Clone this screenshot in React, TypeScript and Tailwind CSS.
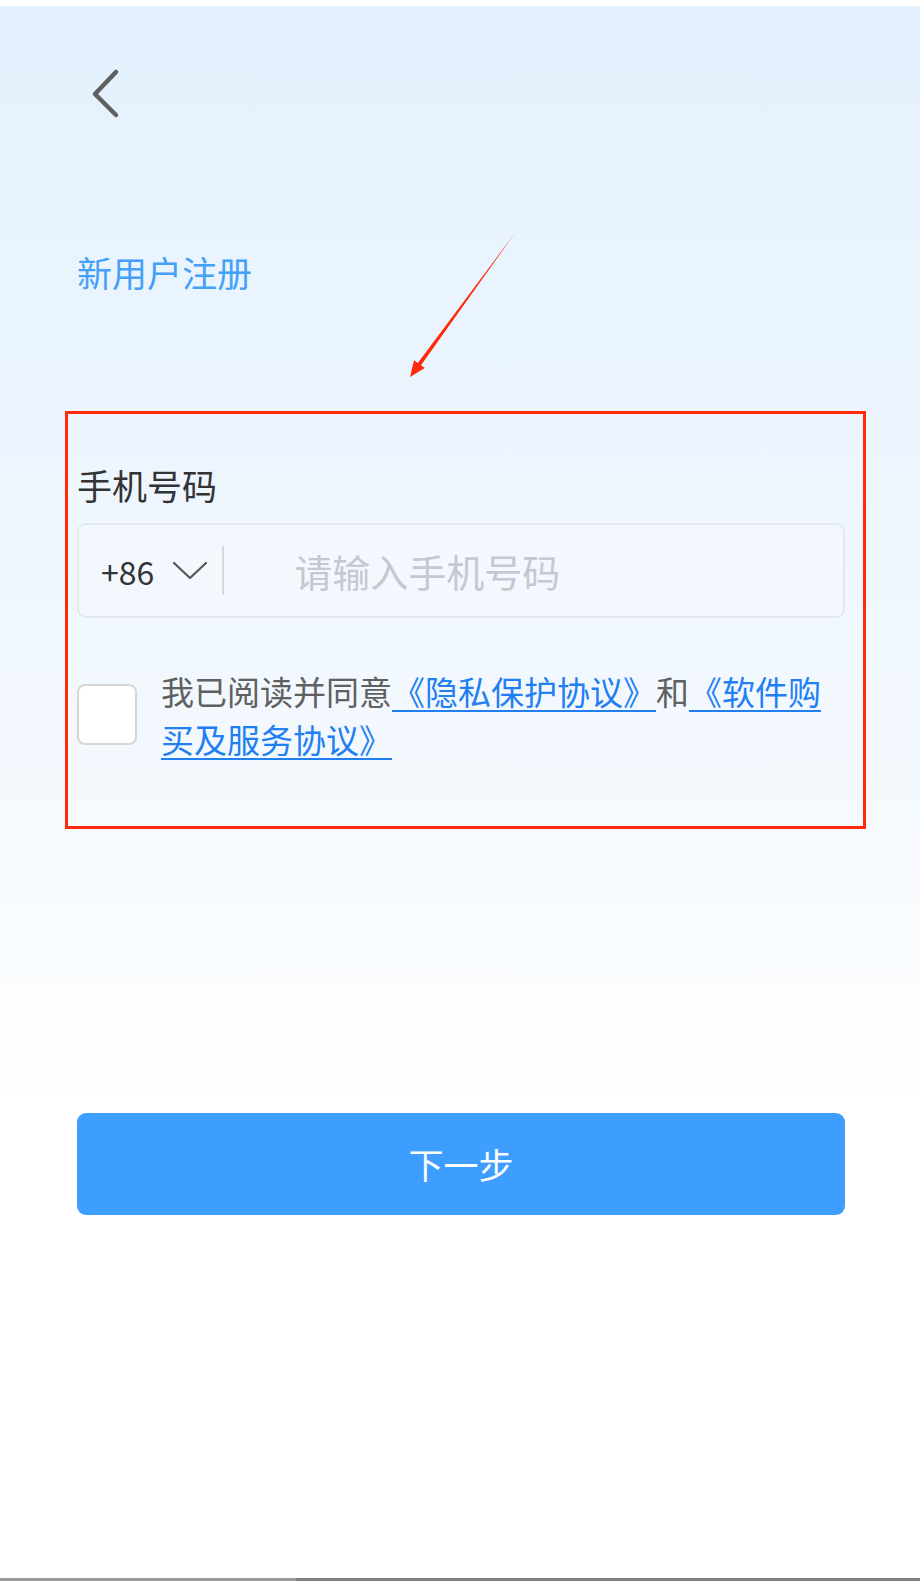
import { useState } from "react";

const FONT = "font-['Noto_Sans_CJK_SC','Noto_Sans',sans-serif]";

export default function App() {
  const [agreed, setAgreed] = useState(false);
  const [phone, setPhone] = useState("");

  return (
    <div className={`relative w-[920px] h-[1581px] flex flex-col bg-white overflow-hidden ${FONT}`}>
      <div className="h-[6px] bg-white" />

      <div className="flex-1 flex flex-col pl-[77px] pr-[75px] bg-linear-to-b from-[#e3f1fe] via-[#f4f9fe] via-50% to-white to-70%">
        {/* back */}
        <button className="ml-[13px] mt-[62px] w-[30px] h-[52px] self-start">
          <svg width="30" height="52" viewBox="0 0 30 52" fill="none">
            <path d="M26 4 L5 26 L26 47" stroke="#606060" strokeWidth="4.5" strokeLinecap="round" strokeLinejoin="round" />
          </svg>
        </button>

        <h1 className="mt-[134px] text-[35px] leading-[35px] text-[#45a0f8]">新用户注册</h1>

        <div className="mt-[178px] text-[35px] leading-[35px] text-[#333333]">手机号码</div>

        {/* phone input */}
        <div className="mt-[21px] h-[95px] flex items-center rounded-[9px] border-2 border-[#e4e8ee] bg-[#f3f8fe]">
          <div className="flex items-center pl-[22px]">
            <span className="text-[32px] text-[#333333]">+86</span>
            <svg className="ml-[18px]" width="36" height="20" viewBox="0 0 36 20" fill="none">
              <path d="M2 2 L18 17 L34 2" stroke="#555555" strokeWidth="2.2" strokeLinecap="round" strokeLinejoin="round" />
            </svg>
            <div className="ml-[14px] w-[2px] h-[49px] bg-[#d8d8d8]" />
          </div>
          <input
            value={phone}
            onChange={(e) => setPhone(e.target.value)}
            placeholder="请输入手机号码"
            className="ml-[70px] flex-1 bg-transparent outline-none text-[38px] text-[#333] placeholder:text-[#c5c8cf]"
          />
        </div>

        {/* agreement */}
        <div className="mt-[49px] flex items-start">
          <button
            onClick={() => setAgreed(!agreed)}
            className="mt-[17px] w-[60px] h-[61px] shrink-0 rounded-[8px] border-2 border-[#d6d6d6] bg-white"
          />
          <p className="ml-[24px] text-[33px] leading-[48px] text-[#606060]">
            我已阅读并同意<a className="text-[#1f7ff3] underline decoration-2 underline-offset-[5px]">《隐私保护协议》</a>和<a className="text-[#1f7ff3] underline decoration-2 underline-offset-[5px]">《软件购买及服务协议》</a>
          </p>
        </div>

        <button className="mt-[350px] h-[102px] rounded-[9px] bg-[#3d9eff] text-white text-[35px]">下一步</button>
      </div>

      <div className="h-[3px] flex">
        <div className="w-[296px] bg-[#9a9a9a]" />
        <div className="flex-1 bg-[#808080]" />
      </div>

      {/* annotation */}
      <div className="absolute left-[65px] top-[411px] w-[801px] h-[418px] border-[3px] border-[#ff2a0a] pointer-events-none" />
      <svg className="absolute left-0 top-0 pointer-events-none" width="920" height="420" viewBox="0 0 920 420">
        <polygon
          points="515,233 421,365.3 424.8,368 410,377 414,360.2 417.8,362.9"
          fill="#ff2a0a"
        />
      </svg>
    </div>
  );
}
